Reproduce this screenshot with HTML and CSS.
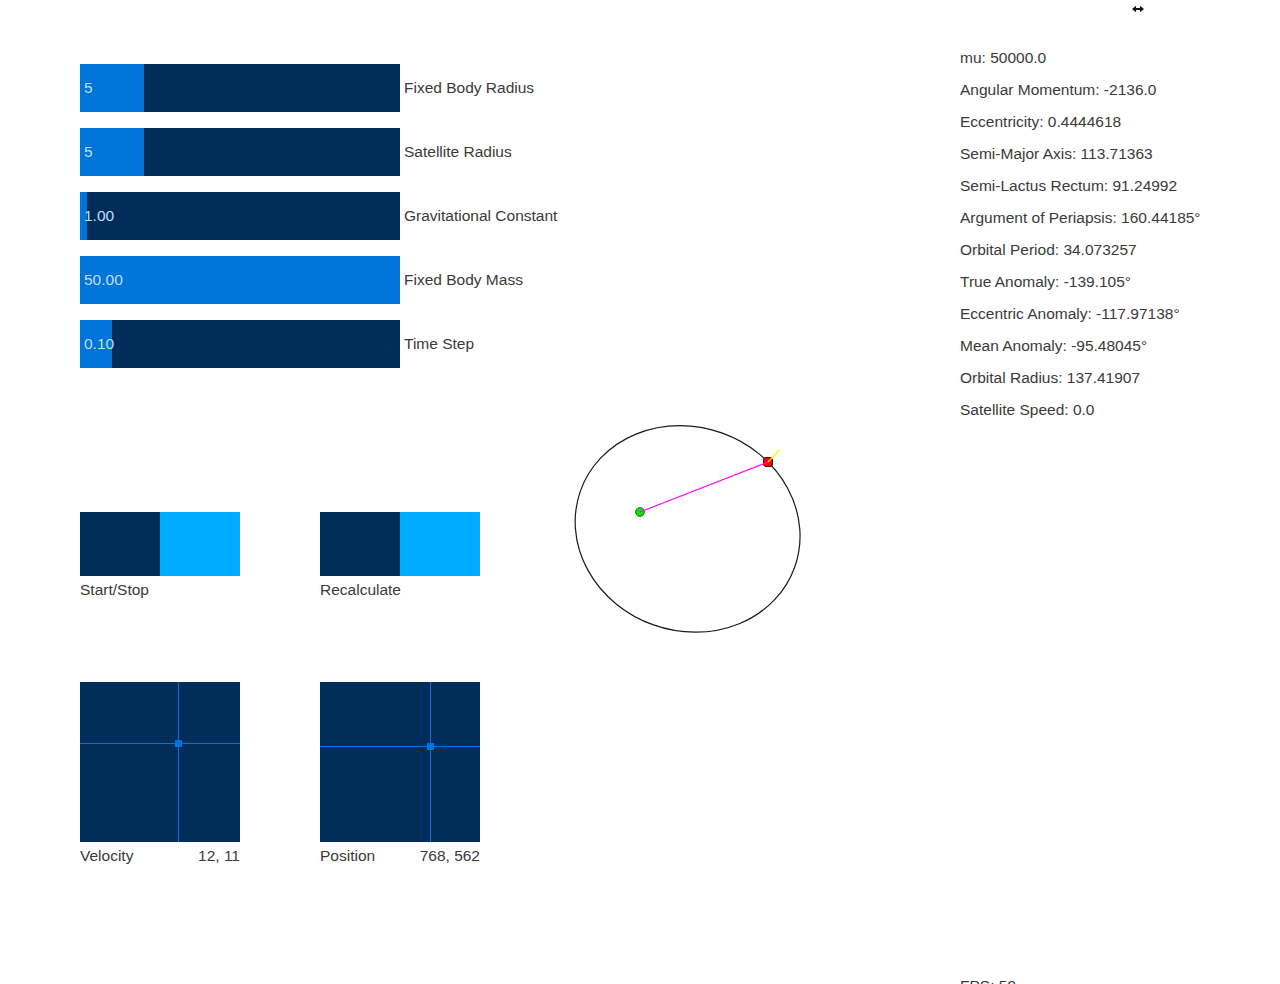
FILE: index.html
```html
<!DOCTYPE html>
<html>
<head>
<meta charset="utf-8">
<title>Orbit</title>
<link rel="stylesheet" href="styles.css">
</head>
<body>
<div class="page">
  <div class="left">
    <div class="sliders">
      <div class="slider"><div class="bar"><div class="fill" style="width:64px"></div><span class="val">5</span></div><span class="lbl">Fixed Body Radius</span></div>
      <div class="slider"><div class="bar"><div class="fill" style="width:64px"></div><span class="val">5</span></div><span class="lbl">Satellite Radius</span></div>
      <div class="slider"><div class="bar"><div class="fill" style="width:7px"></div><span class="val">1.00</span></div><span class="lbl">Gravitational Constant</span></div>
      <div class="slider"><div class="bar"><div class="fill" style="width:320px"></div><span class="val">50.00</span></div><span class="lbl">Fixed Body Mass</span></div>
      <div class="slider"><div class="bar"><div class="fill" style="width:32px"></div><span class="val">0.10</span></div><span class="lbl">Time Step</span></div>
    </div>
    <div class="buttons">
      <div class="btn-group">
        <div class="btn"><div class="half dark"></div><div class="half light"></div></div>
        <div class="cap">Start/Stop</div>
      </div>
      <div class="btn-group">
        <div class="btn"><div class="half dark"></div><div class="half light"></div></div>
        <div class="cap">Recalculate</div>
      </div>
    </div>
    <div class="pads">
      <div class="pad-group">
        <div class="pad">
          <div class="vline" style="left:98px"></div>
          <div class="hline" style="top:61px"></div>
          <div class="dot" style="left:95px;top:58px"></div>
        </div>
        <div class="cap split"><span>Velocity</span><span>12, 11</span></div>
      </div>
      <div class="pad-group">
        <div class="pad">
          <div class="vline" style="left:110px"></div>
          <div class="hline" style="top:64px"></div>
          <div class="dot" style="left:107px;top:61px"></div>
        </div>
        <div class="cap split"><span>Position</span><span>768, 562</span></div>
      </div>
    </div>
  </div>
  <div class="info">
    <div class="line">mu: 50000.0</div>
    <div class="line">Angular Momentum: -2136.0</div>
    <div class="line">Eccentricity: 0.4444618</div>
    <div class="line">Semi-Major Axis: 113.71363</div>
    <div class="line">Semi-Lactus Rectum: 91.24992</div>
    <div class="line">Argument of Periapsis: 160.44185°</div>
    <div class="line">Orbital Period: 34.073257</div>
    <div class="line">True Anomaly: -139.105°</div>
    <div class="line">Eccentric Anomaly: -117.97138°</div>
    <div class="line">Mean Anomaly: -95.48045°</div>
    <div class="line">Orbital Radius: 137.41907</div>
    <div class="line">Satellite Speed: 0.0</div>
    <div class="line fps">FPS: 59</div>
  </div>
  <svg class="orbit" width="1280" height="984" viewBox="0 0 1280 984">
    <ellipse cx="687.6" cy="528.9" rx="113.7" ry="101.9" transform="rotate(19.56 687.6 528.9)" fill="none" stroke="#1a1a1a" stroke-width="1.2"/>
    <circle cx="640" cy="512" r="4.5" fill="#11dd11" stroke="#225522" stroke-width="0.8"/>
    <rect x="763.5" y="457.5" width="9" height="9" rx="2.5" fill="#ff0000" stroke="#220000" stroke-width="0.9"/>
    <line x1="640" y1="512" x2="768" y2="462" stroke="#ff00ff" stroke-width="1.1"/>
    <line x1="768" y1="462" x2="779.5" y2="450" stroke="#ffee00" stroke-width="1.1"/>
  </svg>
  <svg class="cursor" width="14" height="8" viewBox="0 0 14 8">
    <path d="M1 4 L5 0.8 L5 3 L9 3 L9 0.8 L13 4 L9 7.2 L9 5 L5 5 L5 7.2 Z" fill="#111"/>
  </svg>
</div>
</body>
</html>
```

FILE: styles.css
```css
* { box-sizing: border-box; }
html, body {
  margin: 0;
  padding: 0;
  background: #ffffff;
}
body {
  font-family: "Liberation Sans", Arial, sans-serif;
  font-size: 15.5px;
  color: #3a3a3a;
}
.page {
  position: relative;
  width: 1280px;
  height: 984px;
  overflow: hidden;
  display: grid;
  grid-template-columns: 960px 1fr;
}
.left {
  padding-left: 80px;
  padding-top: 64px;
}
.sliders {
  display: flex;
  flex-direction: column;
  gap: 16px;
}
.slider {
  display: flex;
  align-items: center;
  height: 48px;
}
.bar {
  position: relative;
  width: 320px;
  height: 48px;
  background: #002d5a;
  display: flex;
  align-items: center;
}
.fill {
  position: absolute;
  left: 0;
  top: 0;
  bottom: 0;
  background: #0074d9;
}
.val {
  position: relative;
  padding-left: 4px;
  color: #c4def7;
  line-height: 20px;
}
.lbl {
  margin-left: 4px;
  line-height: 20px;
}
.buttons {
  margin-top: 144px;
  display: flex;
  gap: 80px;
}
.btn-group, .pad-group {
  width: 160px;
}
.btn {
  display: flex;
  height: 64px;
}
.half {
  flex: 1;
}
.half.dark { background: #002d5a; }
.half.light { background: #00aaff; }
.cap {
  margin-top: 4px;
  line-height: 20px;
}
.split {
  display: flex;
  justify-content: space-between;
}
.pads {
  margin-top: 82px;
  display: flex;
  gap: 80px;
}
.pad {
  position: relative;
  width: 160px;
  height: 160px;
  background: #002d5a;
}
.vline {
  position: absolute;
  top: 0;
  bottom: 0;
  width: 1px;
  background: #0074d9;
}
.hline {
  position: absolute;
  left: 0;
  right: 0;
  height: 1px;
  background: #0074d9;
}
.dot {
  position: absolute;
  width: 7px;
  height: 7px;
  background: #0074d9;
}
.info {
  padding-top: 42px;
  display: flex;
  flex-direction: column;
}
.line {
  line-height: 32px;
  white-space: nowrap;
}
.fps {
  margin-top: 544px;
}
.orbit {
  position: absolute;
  left: 0;
  top: 0;
  pointer-events: none;
}
.cursor {
  position: absolute;
  left: 1131px;
  top: 5px;
}
```
